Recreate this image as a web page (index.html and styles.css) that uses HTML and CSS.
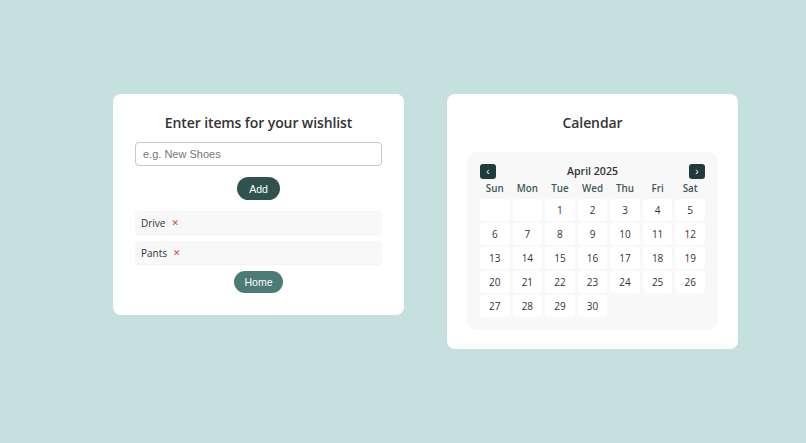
FILE: index.html
```html
<!DOCTYPE html>
<html lang="en">
<head>
<meta charset="utf-8">
<title>Wishlist &amp; Calendar</title>
<link rel="stylesheet" href="styles.css">
</head>
<body>
<main class="row">
  <section class="card wish">
    <h2 class="title">Enter items for your wishlist</h2>
    <input class="field" type="text" placeholder="e.g. New Shoes">
    <button class="btn btn-add">Add</button>
    <ul class="items">
      <li class="item"><span>Drive</span><span class="del">✕</span></li>
      <li class="item"><span>Pants</span><span class="del">✕</span></li>
    </ul>
    <button class="btn btn-home">Home</button>
  </section>
  <section class="card cal-card">
    <h2 class="title">Calendar</h2>
    <div class="cal">
      <div class="cal-head">
        <button class="nav">‹</button>
        <span class="month">April 2025</span>
        <button class="nav">›</button>
      </div>
      <div class="grid names">
        <span>Sun</span><span>Mon</span><span>Tue</span><span>Wed</span><span>Thu</span><span>Fri</span><span>Sat</span>
      </div>
      <div class="grid days">
        <span class="day"></span><span class="day"></span><span class="day">1</span><span class="day">2</span><span class="day">3</span><span class="day">4</span><span class="day">5</span>
        <span class="day">6</span><span class="day">7</span><span class="day">8</span><span class="day">9</span><span class="day">10</span><span class="day">11</span><span class="day">12</span>
        <span class="day">13</span><span class="day">14</span><span class="day">15</span><span class="day">16</span><span class="day">17</span><span class="day">18</span><span class="day">19</span>
        <span class="day">20</span><span class="day">21</span><span class="day">22</span><span class="day">23</span><span class="day">24</span><span class="day">25</span><span class="day">26</span>
        <span class="day">27</span><span class="day">28</span><span class="day">29</span><span class="day">30</span>
      </div>
    </div>
  </section>
</main>
</body>
</html>
```
FILE: styles.css
```css
* { box-sizing: border-box; }
html, body { margin: 0; height: 100%; }
body {
  background: #c6e0df;
  font-family: "Open Sans", "DejaVu Sans", sans-serif;
  color: #333;
  display: flex;
  align-items: center;
}
.row {
  display: flex;
  align-items: flex-start;
  gap: 43px;
  padding-left: 113px;
}
.card {
  width: 291px;
  background: #fff;
  border-radius: 8px;
  padding: 20px 22px 22px;
  display: flex;
  flex-direction: column;
  align-items: center;
}
.title {
  margin: 0;
  font-size: 14px;
  line-height: 18px;
  font-weight: 600;
  letter-spacing: -0.1px;
  color: #333;
  text-align: center;
}
.field {
  margin-top: 10px;
  width: 100%;
  height: 24px;
  border: 1px solid #c8c8c8;
  border-radius: 4px;
  padding: 0 7px;
  font-family: "Liberation Sans", Arial, sans-serif;
  font-size: 11px;
  outline: none;
}
.field::placeholder { color: #777; }
.btn {
  border: 0;
  border-radius: 12px;
  color: #fff;
  font-family: "Liberation Sans", Arial, sans-serif;
  font-size: 10.5px;
  padding: 0;
}
.btn-add {
  margin-top: 11px;
  width: 43px;
  height: 23px;
  background: #2f5250;
}
.btn-home {
  margin-top: 7px;
  width: 49px;
  height: 22px;
  background: #4b7b77;
}
.items {
  list-style: none;
  margin: 11px 0 0;
  padding: 0;
  width: 100%;
  display: flex;
  flex-direction: column;
  gap: 7px;
}
.item {
  height: 23px;
  background: #f8f8f8;
  border-radius: 4px;
  box-shadow: 0 1px 2px rgba(0,0,0,0.06);
  padding: 0 6px;
  display: flex;
  align-items: center;
  gap: 6px;
  font-size: 10px;
  color: #333;
}
.del { color: #e0453f; font-size: 9px; font-weight: 700; }
.cal-card { padding: 20px 20px 19px; }
.cal {
  margin-top: 20px;
  width: 251px;
  background: #f8f8f8;
  border-radius: 10px;
  padding: 12px 13px 13px;
}
.cal-head {
  height: 14px;
  display: flex;
  align-items: center;
  justify-content: space-between;
}
.nav {
  width: 16px;
  height: 15px;
  border: 0;
  border-radius: 3px;
  background: #1f3b3a;
  color: #fff;
  font-size: 10px;
  line-height: 15px;
  padding: 0;
}
.month {
  font-size: 10.6px;
  font-weight: 600;
  color: #333;
}
.grid {
  display: grid;
  grid-template-columns: repeat(7, 1fr);
  column-gap: 3px;
}
.names {
  margin-top: 4px;
  height: 14px;
  line-height: 14px;
  text-align: center;
  font-size: 9.8px;
  font-weight: 600;
  color: #3d5856;
}
.days {
  margin-top: 3px;
  row-gap: 2px;
}
.day {
  height: 22px;
  background: #fff;
  border-radius: 4px;
  display: flex;
  align-items: center;
  justify-content: center;
  font-size: 10px;
  color: #333;
}
```
